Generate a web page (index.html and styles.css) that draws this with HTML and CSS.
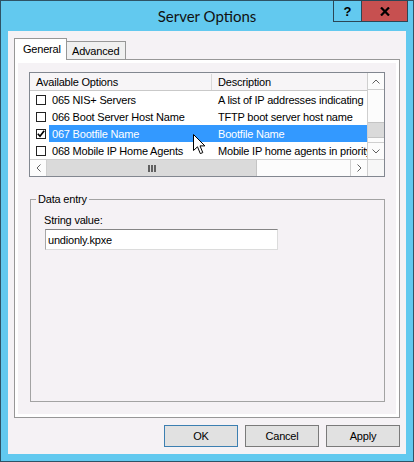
FILE: index.html
```html
<!DOCTYPE html>
<html lang="en">
<head>
  <meta charset="UTF-8">
  <title>Server Options</title>
  <link rel="stylesheet" href="styles.css">
</head>
<body>
  <div class="window">
    <!-- Title bar -->
    <div class="titlebar">
      <span class="title">Server Options</span>
      <div class="caption-buttons">
        <span class="cap-btn help">?</span>
        <span class="cap-btn close">
          <svg width="10" height="9" viewBox="0 0 10 9"><path d="M1 0.5 L9 8.5 M9 0.5 L1 8.5" stroke="#000" stroke-width="2.2"/></svg>
        </span>
      </div>
    </div>

    <!-- Client area -->
    <div class="client">
      <div class="tabs">
        <div class="tab active">General</div>
        <div class="tab">Advanced</div>
      </div>

      <div class="tab-panel">
        <div class="page">
          <div class="listview">
            <div class="lv-main">
              <div class="lv-header">
                <div class="col-name">Available Options</div>
                <div class="col-desc">Description</div>
              </div>
              <div class="lv-row">
                <div class="check-cell"><span class="checkbox"></span></div>
                <div class="name-cell">065 NIS+ Servers</div>
                <div class="desc-cell">A list of IP addresses indicating</div>
              </div>
              <div class="lv-row">
                <div class="check-cell"><span class="checkbox"></span></div>
                <div class="name-cell">066 Boot Server Host Name</div>
                <div class="desc-cell">TFTP boot server host name</div>
              </div>
              <div class="lv-row selected">
                <div class="check-cell">
                  <span class="checkbox">
                    <svg width="8" height="8" viewBox="0 0 8 8"><path d="M0.8 3.8 L3 6.2 L7.2 0.8" fill="none" stroke="#000" stroke-width="1.7"/></svg>
                  </span>
                </div>
                <div class="name-cell">067 Bootfile Name</div>
                <div class="desc-cell">Bootfile Name</div>
              </div>
              <div class="lv-row">
                <div class="check-cell"><span class="checkbox"></span></div>
                <div class="name-cell">068 Mobile IP Home Agents</div>
                <div class="desc-cell">Mobile IP home agents in priority</div>
              </div>
            </div>

            <div class="vscroll">
              <div class="sb-btn up">
                <svg width="8" height="5" viewBox="0 0 8 5"><path d="M0.5 4.5 L4 1 L7.5 4.5" fill="none" stroke="#606060"/></svg>
              </div>
              <div class="sb-track">
                <div class="vthumb"></div>
              </div>
              <div class="sb-btn down">
                <svg width="8" height="5" viewBox="0 0 8 5"><path d="M0.5 0.5 L4 4 L7.5 0.5" fill="none" stroke="#606060"/></svg>
              </div>
            </div>

            <div class="hscroll">
              <div class="sb-btn left">
                <svg width="5" height="8" viewBox="0 0 5 8"><path d="M4.5 0.5 L1 4 L4.5 7.5" fill="none" stroke="#606060"/></svg>
              </div>
              <div class="hthumb">
                <svg width="8" height="7" viewBox="0 0 8 7"><rect x="0" y="0" width="2" height="7" fill="#606060"/><rect x="3" y="0" width="2" height="7" fill="#606060"/><rect x="6" y="0" width="2" height="7" fill="#606060"/></svg>
              </div>
              <div class="sb-track"></div>
              <div class="sb-btn right">
                <svg width="5" height="8" viewBox="0 0 5 8"><path d="M0.5 0.5 L4 4 L0.5 7.5" fill="none" stroke="#606060"/></svg>
              </div>
            </div>
            <div class="corner"></div>
          </div>

          <fieldset class="group">
            <legend>Data entry</legend>
            <div class="group-body">
              <label for="string-value">String value:</label>
              <input type="text" id="string-value" class="text-field" value="undionly.kpxe">
            </div>
          </fieldset>
        </div>
      </div>

      <div class="buttons">
        <button class="btn default">OK</button>
        <button class="btn">Cancel</button>
        <button class="btn">Apply</button>
      </div>
    </div>

    <!-- Mouse pointer -->
    <svg class="cursor" width="13" height="21" viewBox="0 0 13 21">
      <path d="M0.5 0.5 V16.5 L4.5 12.8 L7.3 19.6 L9.8 18.6 L7 11.9 H11.9 Z" fill="#fff" stroke="#000" stroke-linejoin="miter"/>
    </svg>
  </div>
</body>
</html>
```

FILE: styles.css
```css
* {
  box-sizing: border-box;
}

body {
  margin: 0;
  font-family: "Liberation Sans", Arial, sans-serif;
  font-size: 11px;
  letter-spacing: -0.2px;
  color: #000;
}

/* Window frame */
.window {
  position: relative;
  width: 414px;
  height: 462px;
  display: flex;
  flex-direction: column;
  padding: 0 7px 7px;
  background-color: #62c9ef;
  border: 1px solid #2e5366;
}

.titlebar {
  position: relative;
  height: 30px;
  text-align: center;
}

.title {
  font-family: Lato, "Liberation Sans", sans-serif;
  font-size: 15px;
  line-height: 30px;
  letter-spacing: 0;
  color: #111;
}

.caption-buttons {
  position: absolute;
  top: -1px;
  right: -2px;
  display: flex;
}

.cap-btn {
  height: 22px;
  display: flex;
  align-items: center;
  justify-content: center;
  border: 1px solid #2b4655;
}

.cap-btn.help {
  width: 29px;
  margin-right: -1px;
  font-size: 13px;
  font-weight: bold;
  letter-spacing: 0;
  background-color: #62c9ef;
}

.cap-btn.close {
  width: 47px;
  background-color: #c75050;
}

/* Client area */
.client {
  flex: 1;
  display: flex;
  flex-direction: column;
  padding: 7px 6px;
  background-color: #f5f2f5;
}

.tabs {
  height: 21px;
  display: flex;
  align-items: flex-end;
}

.tab {
  border: 1px solid #979797;
  border-bottom: none;
}

.tab.active {
  position: relative;
  z-index: 1;
  width: 53px;
  height: 22px;
  margin-bottom: -1px;
  padding: 3px 0 0 8px;
  line-height: 15px;
  background-color: #fff;
}

.tab:not(.active) {
  width: 60px;
  height: 18px;
  margin-left: -1px;
  padding: 1px 0 0 5px;
  line-height: 16px;
  background-color: #f0f0f0;
}

.tab-panel {
  height: 359px;
  padding: 3px;
  border: 1px solid #979797;
  background-color: #fff;
}

.page {
  height: 100%;
  display: flex;
  flex-direction: column;
  padding: 9px 11px 12px;
  background-color: #f5f2f5;
}

/* List view */
.listview {
  height: 105px;
  display: grid;
  grid-template-columns: 1fr 17px;
  grid-template-rows: 86px 17px;
  border: 1px solid #828790;
  background-color: #fff;
}

.lv-main {
  overflow: hidden;
}

.lv-header {
  display: flex;
  height: 18px;
  padding-top: 1px;
  line-height: 16px;
  border-bottom: 1px solid #c9c9c9;
  background-color: #f7f5f7;
  white-space: nowrap;
}

.lv-header .col-name {
  width: 182px;
  padding-left: 6px;
  border-right: 1px solid #d9d9d9;
}

.lv-header .col-desc {
  padding-left: 6px;
}

.lv-row {
  display: flex;
  height: 17px;
  white-space: nowrap;
}

.check-cell {
  width: 19px;
  display: flex;
  align-items: center;
  padding-left: 6px;
}

.checkbox {
  width: 10px;
  height: 10px;
  display: flex;
  align-items: center;
  justify-content: center;
  border: 1px solid #222;
  background-color: #fff;
}

.name-cell {
  width: 163px;
  padding: 1px 0 0 3px;
  line-height: 16px;
}

.desc-cell {
  flex: 1;
  min-width: 0;
  padding: 1px 0 0 6px;
  line-height: 16px;
  overflow: hidden;
}

.lv-row.selected .name-cell,
.lv-row.selected .desc-cell {
  background-color: #3399ff;
  color: #fff;
}

/* Scroll bars */
.vscroll {
  display: flex;
  flex-direction: column;
  border-left: 1px solid #cfcfcf;
  background-color: #fcfcfc;
}

.sb-btn {
  display: flex;
  align-items: center;
  justify-content: center;
  flex: none;
}

.vscroll .sb-btn {
  height: 17px;
}

.vscroll .up {
  border-bottom: 1px solid #cfcfcf;
}

.vscroll .down {
  border-top: 1px solid #cfcfcf;
}

.sb-track {
  flex: 1;
}

.vthumb {
  height: 16px;
  margin-top: 32px;
  background-color: #dadada;
  border-top: 1px solid #c4c4c4;
  border-bottom: 1px solid #c4c4c4;
}

.hscroll {
  display: flex;
  border-top: 1px solid #cfcfcf;
  background-color: #fcfcfc;
}

.hscroll .sb-btn {
  width: 17px;
}

.hscroll .left {
  border-right: 1px solid #cfcfcf;
}

.hscroll .right {
  border-left: 1px solid #cfcfcf;
}

.hthumb {
  width: 210px;
  display: flex;
  align-items: center;
  justify-content: center;
  background-color: #dadada;
  border-right: 1px solid #c4c4c4;
}

.corner {
  border-top: 1px solid #cfcfcf;
  border-left: 1px solid #cfcfcf;
  background-color: #f7f7f7;
}

/* Group box */
.group {
  flex: 1;
  min-width: 0;
  margin: 15px 0 0 1px;
  padding: 0;
  border: 1px solid #a3a3a3;
}

.group legend {
  margin-left: 5px;
  padding: 0 2px;
  line-height: 14px;
}

.group-body {
  padding: 7px 13px 0;
}

.group-body label {
  display: block;
  line-height: 14px;
}

.text-field {
  display: block;
  width: 233px;
  height: 21px;
  margin: 2px 0 0 1px;
  padding: 0 2px;
  font-family: "Liberation Sans", Arial, sans-serif;
  font-size: 11px;
  letter-spacing: -0.2px;
  color: #000;
  background-color: #fff;
  border: 1px solid;
  border-color: #858585 #dcdcdc #dcdcdc #a8a8a8;
  outline: none;
}

/* Dialog buttons */
.buttons {
  display: flex;
  justify-content: flex-end;
  gap: 7px;
  margin-top: 7px;
}

.btn {
  width: 74px;
  height: 22px;
  padding: 0;
  font-family: "Liberation Sans", Arial, sans-serif;
  font-size: 11px;
  letter-spacing: -0.2px;
  color: #000;
  background-color: #e1e1e1;
  border: 1px solid #7a7a7a;
}

.btn.default {
  border-color: #3c7fb1;
}

.cursor {
  position: absolute;
  left: 192px;
  top: 133px;
}
```
